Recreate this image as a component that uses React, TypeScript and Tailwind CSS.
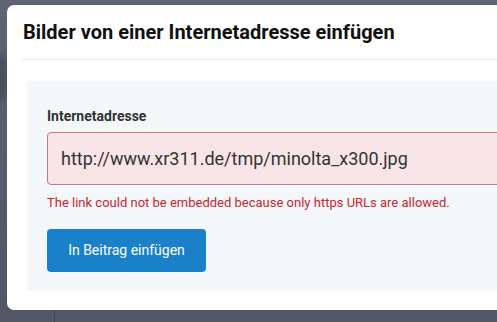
const App = () => {
  return (
    <div
      className="relative w-[497px] h-[322px] overflow-hidden bg-gradient-to-b from-[#5f6573] to-[#505664] pl-[7px] pt-[5px]"
      style={{ fontFamily: "Roboto, 'Liberation Sans', sans-serif" }}
    >
      {/* page behind the overlay */}
      <div className="absolute left-[54px] top-[300px] bottom-0 w-px bg-[#434856]"></div>
      <div className="absolute left-[-6px] top-[55px] w-[14px] h-[45px] rounded-full bg-[#4a4f5b] blur-[3px]"></div>

      {/* dialog */}
      <div className="relative w-[540px] h-[305px] bg-white rounded-[7px] flex flex-col">
        <div className="ml-[15px] pl-[1px] pt-[15px] pb-[14px] border-b border-[#e8e8e8]">
          <h2 className="text-[20px] leading-[25px] font-bold text-[#111]">
            Bilder von einer Internetadresse einfügen
          </h2>
        </div>
        <div className="mt-[21px] ml-[20px] bg-[#f5f8fb] h-[210px] px-[20px] pt-[26px] flex flex-col items-start">
          <label className="block text-[14px] leading-[18px] font-bold text-[#333] mb-[7px]">
            Internetadresse
          </label>
          <div className="h-[53px] w-[500px] rounded-[4px] border border-[#c27a81] bg-[#f9e5e7] flex items-center px-[13px]">
            <span className="text-[18px] text-[#333]">
              http://www.xr311.de/tmp/minolta_x300.jpg
            </span>
          </div>
          <p className="mt-[10px] text-[13px] leading-[16px] text-[#c9252d]">
            The link could not be embedded because only https URLs are allowed.
          </p>
          <button className="mt-[18px] w-[159px] h-[43px] rounded-[4px] bg-[#1a80c9] text-white text-[14px]">
            In Beitrag einfügen
          </button>
        </div>
      </div>
    </div>
  );
};

export default App;
